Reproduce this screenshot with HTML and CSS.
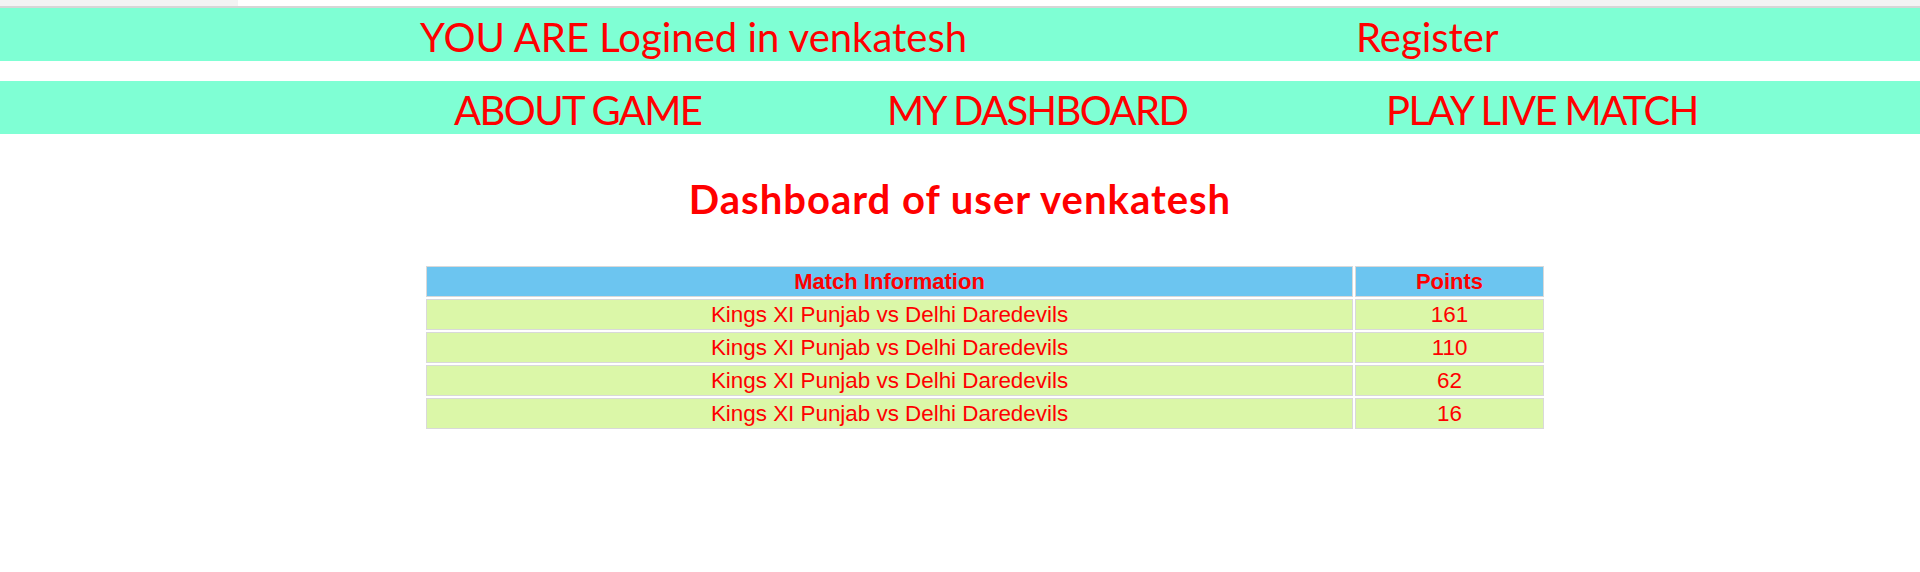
FILE: index.html
```html
<!DOCTYPE html>
<html lang="en">
<head>
<meta charset="utf-8">
<title>Dashboard</title>
<link rel="stylesheet" href="styles.css">
</head>
<body>
<div class="chrome"><div class="chrome-tab"></div></div>
<div class="bar bar-top">
  <span class="item item-login">YOU ARE Logined in venkatesh</span>
  <a class="item" href="#">Register</a>
</div>
<nav class="bar bar-nav">
  <a class="item item-about" href="#">ABOUT GAME</a>
  <a class="item item-dash" href="#">MY DASHBOARD</a>
  <a class="item" href="#">PLAY LIVE MATCH</a>
</nav>
<h1 class="title">Dashboard of user venkatesh</h1>
<table class="scores">
  <thead>
    <tr><th class="col-match">Match Information</th><th class="col-points">Points</th></tr>
  </thead>
  <tbody>
    <tr><td>Kings XI Punjab vs Delhi Daredevils</td><td>161</td></tr>
    <tr><td>Kings XI Punjab vs Delhi Daredevils</td><td>110</td></tr>
    <tr><td>Kings XI Punjab vs Delhi Daredevils</td><td>62</td></tr>
    <tr><td>Kings XI Punjab vs Delhi Daredevils</td><td>16</td></tr>
  </tbody>
</table>
</body>
</html>
```
FILE: styles.css
```css
html, body {
  margin: 0;
  padding: 0;
  background: #ffffff;
}
body {
  font-family: Lato, "Open Sans", sans-serif;
  color: #ff0000;
}
.chrome {
  height: 6px;
  background: #f3f3f3;
  border-bottom: 2px solid #d6d6d6;
  padding-left: 238px;
}
.chrome-tab {
  width: 1312px;
  height: 6px;
  background: #ffffff;
}
.bar {
  display: flex;
  box-sizing: border-box;
  height: 53px;
  padding-top: 5px;
  background: #7fffd4;
  font-size: 40px;
  line-height: 48px;
  white-space: nowrap;
}
.bar-top {
  padding-left: 420px;
  margin-bottom: 20px;
}
.bar-nav {
  padding-left: 454px;
  letter-spacing: -1.6px;
}
.item {
  color: #ff0000;
  text-decoration: none;
}
.item-login { width: 936px; }
.item-about { width: 433px; }
.item-dash { width: 499px; }
.title {
  margin: 41px 0 41px;
  font-size: 40px;
  line-height: 48px;
  font-weight: 700;
  text-align: center;
  color: #ff0000;
  letter-spacing: 1px;
}
.scores {
  margin-left: 424px;
  width: 1122px;
  table-layout: fixed;
  border-collapse: separate;
  border-spacing: 2px;
  font-family: "Liberation Sans", Arial, sans-serif;
  font-size: 22px;
  line-height: 25px;
  color: #ff0000;
}
.scores th,
.scores td {
  box-sizing: border-box;
  border: 1px solid #d9d9d9;
  padding: 2px 1px;
  text-align: center;
}
.scores th {
  background: #6cc5f0;
  font-weight: 700;
}
.scores td {
  background: #dbf7a8;
  font-weight: 400;
  font-size: 22.4px;
}
.col-match { width: 927px; }
.col-points { width: 189px; }
```
